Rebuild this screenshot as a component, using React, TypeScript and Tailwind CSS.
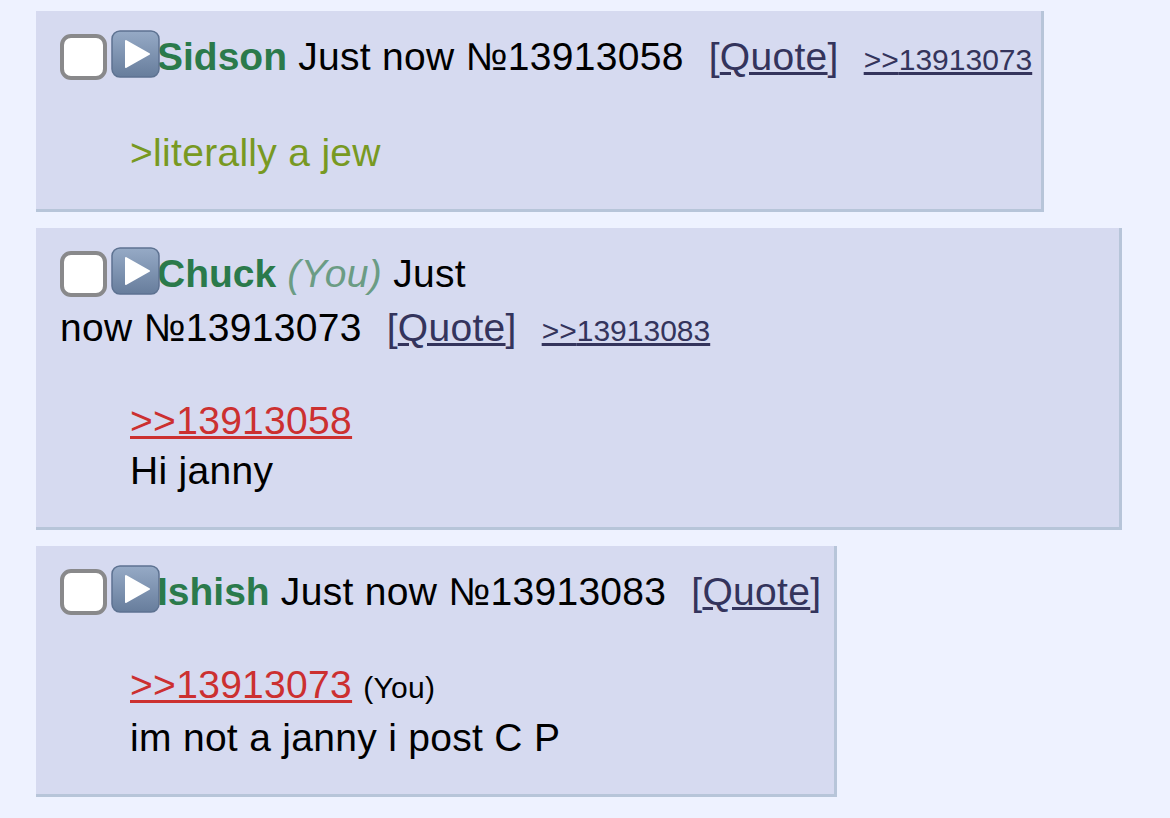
import React from 'react';

type PostProps = {
  width: string;
  children: React.ReactNode;
};

function Checkbox() {
  return <span className="inline-block h-[46px] w-[47px] rounded-[11px] border-[4px] border-[#89898b] bg-white align-[-10px]" />;
}

function PlayIcon() {
  return (
    <svg className="relative z-10 -mr-[3px] ml-[4px] inline-block h-[48px] w-[49px] align-[-8px]" viewBox="0 0 49 48">
      <defs>
        <linearGradient id="play-bg" x1="0" y1="0" x2="0" y2="1">
          <stop offset="0" stopColor="#96aac6" />
          <stop offset="1" stopColor="#677d9c" />
        </linearGradient>
      </defs>
      <rect x="1" y="1" width="47" height="46" rx="8" fill="url(#play-bg)" stroke="#5d7291" strokeWidth="1.5" />
      <path d="M15 11 L38 24 L15 37 Z" fill="#ffffff" stroke="#ffffff" strokeWidth="2" strokeLinejoin="round" />
    </svg>
  );
}

function Post({ width, children }: PostProps) {
  return <div className={`${width} border-r-[3px] border-b-[3px] border-[#b7c5d9] bg-[#d6daf0] pt-[18px] pb-[31px] pl-[24px]`}>{children}</div>;
}

function QuoteButton() {
  return (
    <span className="ml-[25px] text-[#34345c]">
      [<span className="underline">Quote</span>]
    </span>
  );
}

function Backlink({ id }: { id: string }) {
  return <span className="ml-[25px] text-[30px] tracking-normal text-[#34345c] underline">&gt;&gt;{id}</span>;
}

function Name({ name }: { name: string }) {
  return <span className="font-bold tracking-normal text-[#2b7a4b]">{name}</span>;
}

export default function App() {
  return (
    <div className="min-h-screen bg-[#eef2ff] pt-[11px] pl-[36px] font-['Liberation_Sans',Arial,Helvetica,sans-serif] text-[39px] tracking-[0.3px] text-black">
      <div className="flex flex-col items-start gap-4">
        <Post width="w-[1008px]">
          <div className="whitespace-nowrap leading-[56px]">
            <Checkbox />
            <PlayIcon />
            <Name name="Sidson" /> Just now №13913058
            <QuoteButton />
            <Backlink id="13913073" />
          </div>
          <div className="mt-[40px] pl-[70px] leading-[50px] text-[#789922]">&gt;literally a jew</div>
        </Post>

        <Post width="w-[1086px]">
          <div className="whitespace-nowrap leading-[56px]">
            <Checkbox />
            <PlayIcon />
            <Name name="Chuck" /> <span className="italic text-[#6b9c84]">(You)</span> Just
          </div>
          <div className="whitespace-nowrap leading-[51px]">
            now №13913073
            <QuoteButton />
            <Backlink id="13913083" />
          </div>
          <div className="mt-[40px] pl-[70px] leading-[50px]">
            <div>
              <span className="text-[#cc3030] underline">&gt;&gt;13913058</span>
            </div>
            <div>Hi janny</div>
          </div>
        </Post>

        <Post width="w-[801px]">
          <div className="whitespace-nowrap leading-[56px]">
            <Checkbox />
            <PlayIcon />
            <Name name="Ishish" /> Just now №13913083
            <QuoteButton />
          </div>
          <div className="mt-[40px] pl-[70px] leading-[50px]">
            <div>
              <span className="text-[#cc3030] underline">&gt;&gt;13913073</span> <span className="text-[30px]">(You)</span>
            </div>
            <div>im not a janny i post C P</div>
          </div>
        </Post>
      </div>
    </div>
  );
}
